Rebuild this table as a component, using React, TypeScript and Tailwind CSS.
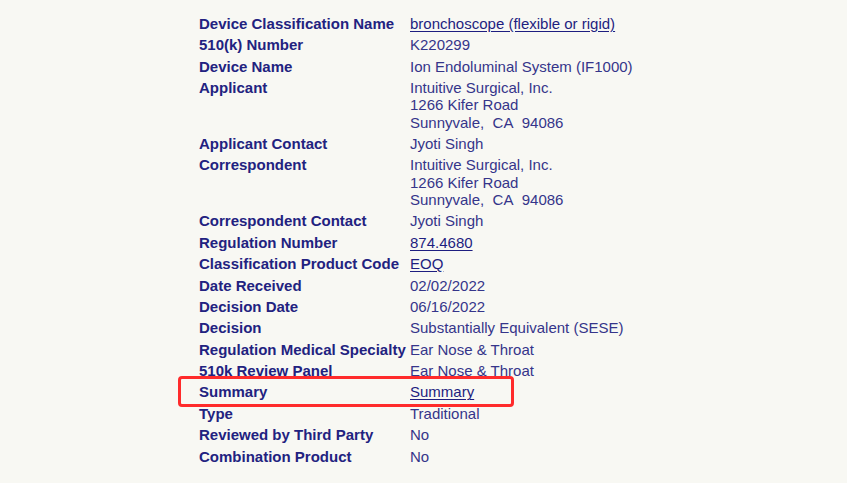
type Row = { label: string; value: string[]; link?: boolean; marked?: boolean };

const rows: Row[] = [
  { label: "Device Classification Name", value: ["bronchoscope (flexible or rigid)"], link: true },
  { label: "510(k) Number", value: ["K220299"] },
  { label: "Device Name", value: ["Ion Endoluminal System (IF1000)"] },
  { label: "Applicant", value: ["Intuitive Surgical, Inc.", "1266 Kifer Road", "Sunnyvale,\u00a0 CA\u00a0 94086"] },
  { label: "Applicant Contact", value: ["Jyoti Singh"] },
  { label: "Correspondent", value: ["Intuitive Surgical, Inc.", "1266 Kifer Road", "Sunnyvale,\u00a0 CA\u00a0 94086"] },
  { label: "Correspondent Contact", value: ["Jyoti Singh"] },
  { label: "Regulation Number", value: ["874.4680"], link: true },
  { label: "Classification Product Code", value: ["EOQ"], link: true },
  { label: "Date Received", value: ["02/02/2022"] },
  { label: "Decision Date", value: ["06/16/2022"] },
  { label: "Decision", value: ["Substantially Equivalent (SESE)"] },
  { label: "Regulation Medical Specialty", value: ["Ear Nose & Throat"] },
  { label: "510k Review Panel", value: ["Ear Nose & Throat"] },
  { label: "Summary", value: ["Summary"], link: true, marked: true },
  { label: "Type", value: ["Traditional"] },
  { label: "Reviewed by Third Party", value: ["No"] },
  { label: "Combination Product", value: ["No"] },
];

export default function App() {
  return (
    <div className="min-h-[483px] w-full bg-[#f8f8f3] pl-[199px] pt-[15px] font-['Liberation_Sans',Arial,sans-serif] text-[15px] leading-[17.25px]">
      <div className="grid grid-cols-[211px_auto] gap-y-[4.15px] w-fit">
        {rows.map((row) => (
          <div key={row.label} className="contents">
            <div className="relative font-bold text-[#222280] whitespace-nowrap">
              {row.marked && (
                <div className="absolute left-[-21px] top-[-7px] h-[31px] w-[336px] rounded-[4px] border-[3px] border-[#ff2b2b]" />
              )}
              {row.label}
            </div>
            <div className="flex flex-col text-[#35358a] whitespace-nowrap">
              {row.value.map((line) =>
                row.link ? (
                  <a key={line} href="#" className="w-fit text-[#1e1e80] underline underline-offset-[2px]">
                    {line}
                  </a>
                ) : (
                  <span key={line}>{line}</span>
                )
              )}
            </div>
          </div>
        ))}
      </div>
    </div>
  );
}
